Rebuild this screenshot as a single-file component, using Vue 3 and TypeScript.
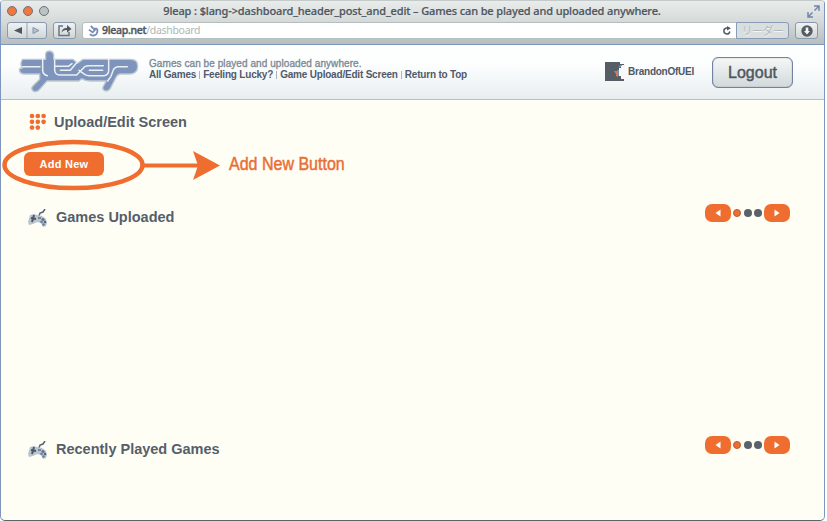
<script setup lang="ts">
const navLinks: string[] = ['All Games', 'Feeling Lucky?', 'Game Upload/Edit Screen', 'Return to Top']
const sections = [
  { id: 'uploaded', title: 'Games Uploaded' },
  { id: 'recent', title: 'Recently Played Games' },
]
const gridDots = [0, 1, 2, 3, 4, 5, 6, 7].map((i) => ({ x: 3 + (i % 3) * 5.8, y: 3 + Math.floor(i / 3) * 5.8 }))
</script>

<template>
  <div class="window">
    <div class="chrome">
      <div class="titlebar">
        <div class="lights"><i class="on"></i><i class="on"></i><i></i></div>
        <div class="title"><span>9leap : $lang-&gt;dashboard_header_post_and_edit – Games can be played and uploaded anywhere.</span></div>
        <svg class="expand" width="13" height="13" viewBox="0 0 13 13"><path d="M7 1h5v5M12 1L7.5 5.5M1 7v5h5M1 12l4.500-4.500" fill="none" stroke="#7287ae" stroke-width="1.5" /></svg>
      </div>
      <div class="toolbar">
        <div class="btn history">
          <svg width="38" height="15" viewBox="0 0 38 15"><path d="M14 4v7L6 7.500z" fill="#50565f" /><path d="M25 4.500v6l6-3z" fill="#b9c2cc" stroke="#8294b0" /><path d="M19 0v15" stroke="#91a1ba" /></svg>
        </div>
        <div class="btn share">
          <svg width="14" height="13" viewBox="0 0 14 13"><path d="M5 2H1v9.500h10V8" fill="none" stroke="#6a7482" stroke-width="1.5" /><path d="M3.500 9C4 5 6 4 9 4V1l4.500 4L9 8.500V6C7 6 5 6 3.500 9z" fill="#50565f" /></svg>
        </div>
        <div class="address">
          <svg class="favicon" width="11" height="12" viewBox="0 0 12 13"><path d="M3 1l3 3h4M1 5l4 3 3-3M10 4c1 4-1 8-4 7M2 10c2 2 3 2 5 1" fill="none" stroke="#788db4" stroke-width="2" /></svg>
          <span class="host">9leap.net</span><span class="path">/dashboard</span>
          <svg class="reload" width="10" height="10" viewBox="0 0 10 10"><path d="M6 2H4.500A3 3 0 1 0 7.800 5.500" fill="none" stroke="#525963" stroke-width="1.5" /><path d="M5 0l4 2.200L5 4.500z" fill="#525963" /></svg>
          <span class="reader">リーダー</span>
        </div>
        <div class="btn download">
          <svg width="12" height="12" viewBox="0 0 12 12"><circle cx="6" cy="6" r="5.700" fill="#555b63" /><path d="M4.700 2.500h2.600V6H9L6 9.500 3 6h1.700z" fill="#f5f7f7" /></svg>
        </div>
      </div>
    </div>

    <header class="header">
      <svg class="logo" width="126" height="48" viewBox="24 12 378 144" role="img" aria-label="9leap">
        <path d="M38 43H107V27Q108 18 119 18Q130 20 131 30V43H188L203 55L219 43H362Q383 43 383 63Q383 87 360 87H330Q322 88 317 99L301 130Q297 139 286 138Q276 134 279 126L289 108H238Q226 108 215 101L207 108H111L88 134Q82 142 71 139Q61 132 68 124L89 103V87H43Q29 87 28 74Q28 70 37 69Q28 55 38 43Z" fill="#7e94bd" stroke="#bfc8cd" stroke-width="4" stroke-linejoin="round" />
        <g fill="none" stroke="#eaf0f4" stroke-width="4.500" stroke-linecap="round" stroke-linejoin="round">
          <path d="M38 65H90M98 43V76Q99 89 112 92" />
          <path d="M134 45V75Q135 90 149 90H200L224 65Q230 62 237 62H280" />
          <path d="M135 64H175L186 56M201 52L181 76H151" />
          <path d="M238 76H278M207 76L225 89Q230 92 238 92H282Q296 91 296 76V43" />
          <path d="M352 65H323Q311 67 308 80L303 94L293 108" />
        </g>
      </svg>
      <div class="intro">
        <p class="tagline">Games can be played and uploaded anywhere.</p>
        <nav><template v-for="(link, i) in navLinks" :key="link"><i v-if="i" class="bar"></i><a>{{ link }}</a></template></nav>
      </div>
      <div class="user">
        <svg width="20" height="20" viewBox="0 0 20 20"><path d="M0 0h15v2h4v1h-3v3h-2v8h2v3h3v2H0z" fill="#575d65" /><path d="M15 7l3-4h2v13h-3l-2-3z" fill="#f6f9fa" /><path d="M9 9h3l1 2v4l-2-1v-2z" fill="#dc744c" /><path d="M13 8v6M14 5l3-2" stroke="#8197bc" stroke-width="1.500" /></svg>
        <span>BrandonOfUEI</span>
      </div>
      <button class="logout">Logout</button>
    </header>

    <main>
      <h1><svg width="18" height="18" viewBox="0 0 18 18"><circle v-for="d in gridDots" :key="`${d.x}-${d.y}`" :cx="d.x" :cy="d.y" r="2.350" fill="#ef6d2f" /></svg><span>Upload/Edit Screen</span></h1>
      <div class="action">
        <button class="add">Add New</button>
        <svg class="callout" width="220" height="54" viewBox="0 0 220 54"><ellipse cx="73.500" cy="27" rx="69" ry="23" fill="none" stroke="#ef6d2f" stroke-width="4.500" /><path d="M144 27.500H198" stroke="#ef6d2f" stroke-width="4" /><path d="M193 13l27 14.500L193 42l5-14.500z" fill="#ef6d2f" /></svg>
        <span class="callout-text">Add New Button</span>
      </div>
      <section v-for="s in sections" :key="s.id">
        <svg class="pad" width="20" height="19" viewBox="0 0 20 19">
          <path d="M11 7l1-3 3-1 2-3" fill="none" stroke="#596574" stroke-width="1.500" />
          <path d="M2 6l4-1 3 1 5 1 4 3 1 4-1 3-3 1-2-4-4-1-4 2-4 1-1-3z" fill="#b8c4cf" />
          <path d="M3 9l5 1M6 6L4 13" stroke="#4f5865" stroke-width="2" />
          <path d="M10 9h3" stroke="#77879c" stroke-width="2" />
          <circle cx="15" cy="10.500" r="1.500" fill="#61728b" /><circle cx="13.500" cy="13" r="1.300" fill="#72819a" /><circle cx="17" cy="13" r="1.200" fill="#566479" /><circle cx="15.500" cy="15.500" r="1.300" fill="#71819a" />
        </svg>
        <h2>{{ s.title }}</h2>
        <div class="pager">
          <button aria-label="Previous"><svg width="6" height="8" viewBox="0 0 6 8"><path d="M5.500 0.500v7L0.500 4z" fill="#fff" /></svg></button>
          <i class="active"></i><i></i><i></i>
          <button aria-label="Next"><svg width="6" height="8" viewBox="0 0 6 8"><path d="M0.500 0.500v7l5-3.500z" fill="#fff" /></svg></button>
        </div>
      </section>
    </main>
  </div>
</template>

<style>
body { margin: 0; background: #fff; overflow: hidden; }
</style>

<style scoped>
* { box-sizing: border-box; }
button { padding: 0; border: 0; font-family: inherit; }
svg { display: block; flex: none; }
.window { width: 825px; height: 521px; border: 1px solid #7e95bf; border-top-color: #c3caca; border-bottom-color: #5e646b; border-radius: 4px 4px 5px 5px; overflow: hidden; background: #fffef5; font-family: "Liberation Sans", Arial, sans-serif; color: #555c66; }
.chrome { height: 44px; background: linear-gradient(#e9eceb, #d5dad9 48%, #b6bfbe); border-bottom: 1px solid #7e95bf; }
.titlebar { height: 20px; display: flex; align-items: center; padding: 0 4px 0 6px; }
.lights { display: flex; gap: 6px; width: 50px; }
.lights i { width: 10px; height: 10px; border-radius: 50%; border: 1.500px solid #6c737c; background: #bbc2c2; }
.lights .on { background: #f0773d; }
.title { flex: 1; display: flex; justify-content: center; padding-right: 40px; font: 500 11px/18px "Noto Sans", sans-serif; white-space: nowrap; color: #4f565f; letter-spacing: -0.125px; -webkit-text-stroke: 0.2px; }
.toolbar { height: 23px; padding: 1px 6px 0; display: flex; }
.btn { height: 17px; border: 1px solid #8999b0; border-radius: 3px; background: linear-gradient(#f0f2f2, #cfd6d6); display: flex; align-items: center; justify-content: center; }
.history { width: 40px; }
.share { width: 23px; margin-left: 6px; }
.address { flex: 1; height: 17px; margin: 0 6px 0 6px; padding-left: 5px; border: 1px solid #b5bebf; border-radius: 3px; background: #fefffe; display: flex; align-items: center; font: 10.5px/15px "Noto Sans", sans-serif; color: #4f565f; }
.host { margin: -1px 0 0 3px; font-weight: 500; letter-spacing: -0.3px; -webkit-text-stroke: 0.4px; }
.path { margin-top: -1px; color: #afb6b7; letter-spacing: -0.3px; }
.reload { margin-left: auto; }
.reader { width: 53px; height: 17px; margin: 0 -1px 0 4px; border: 1px solid #8b9cb8; border-radius: 0 3px 3px 0; background: #d9dede; text-align: center; font: 11px/15px "Noto Sans CJK JP", sans-serif; color: #b2bbbc; text-shadow: 0 1px #f4f6f6; letter-spacing: -0.5px; }
.download { width: 23px; }
.header { height: 55px; padding: 4px 31px 0 17px; display: flex; border-bottom: 1px solid #b9c1c4; background: linear-gradient(#fdffff 35%, #e8edef); }
.intro { margin: 9px 0 0 5px; font-size: 10px; line-height: 11px; white-space: nowrap; }
.tagline { margin: 0; color: #7e8b96; letter-spacing: 0.07px; -webkit-text-stroke: 0.35px; }
nav { display: flex; align-items: center; font-weight: bold; color: #505a6a; letter-spacing: -0.2px; }
.bar { width: 1px; height: 8px; margin: 0 3px; background: #abb5bf; }
.user { display: flex; align-items: center; height: 20px; margin: 13px 0 0 auto; gap: 3px; font-size: 10px; font-weight: bold; letter-spacing: -0.25px; color: #4e5766; }
.user span { margin-top: -1px; }
.logout { width: 81px; height: 31px; margin: 8px 0 0 18px; border: 1px solid #71839f; border-radius: 6px; background: linear-gradient(#f5f7f7, #d2d9da); box-shadow: inset 0 0 1px #60676f; font-size: 16px; color: #50565e; -webkit-text-stroke: 0.45px; }
main { display: block; }
h1, h2 { margin: 0; font-size: 14.5px; font-weight: bold; line-height: 20px; white-space: nowrap; color: #555e6b; }
h1 { height: 38px; padding: 6px 0 0 28px; display: flex; align-items: center; gap: 7px; }
.action { position: relative; height: 54px; padding: 14px 0 0 23px; }
.add { display: block; width: 80px; height: 24px; border-radius: 6px; background: #ef6d2f; color: #fff; font-size: 11px; font-weight: bold; letter-spacing: 0.25px; }
.callout { position: absolute; left: -1px; top: 0; }
.callout-text { position: absolute; left: 228px; top: 14px; font: 19px/24px "Liberation Sans", sans-serif; color: #e96e35; white-space: nowrap; -webkit-text-stroke: 0.5px; transform-origin: left center; transform: scaleX(0.843); }
section { height: 232px; padding: 12px 34px 0 27px; display: flex; align-items: flex-start; }
.pad { margin-top: 5px; }
h2 { margin: 3px 0 0 8px; }
.pager { margin-left: auto; display: flex; align-items: center; gap: 2.250px; }
.pager button { width: 26px; height: 18px; border-radius: 7px; background: #ef6d2f; display: flex; align-items: center; justify-content: center; }
.pager i { width: 8px; height: 8px; border-radius: 50%; background: #59616b; }
.pager .active { background: #ef6d2f; border: 1px solid #b65f38; }
</style>
